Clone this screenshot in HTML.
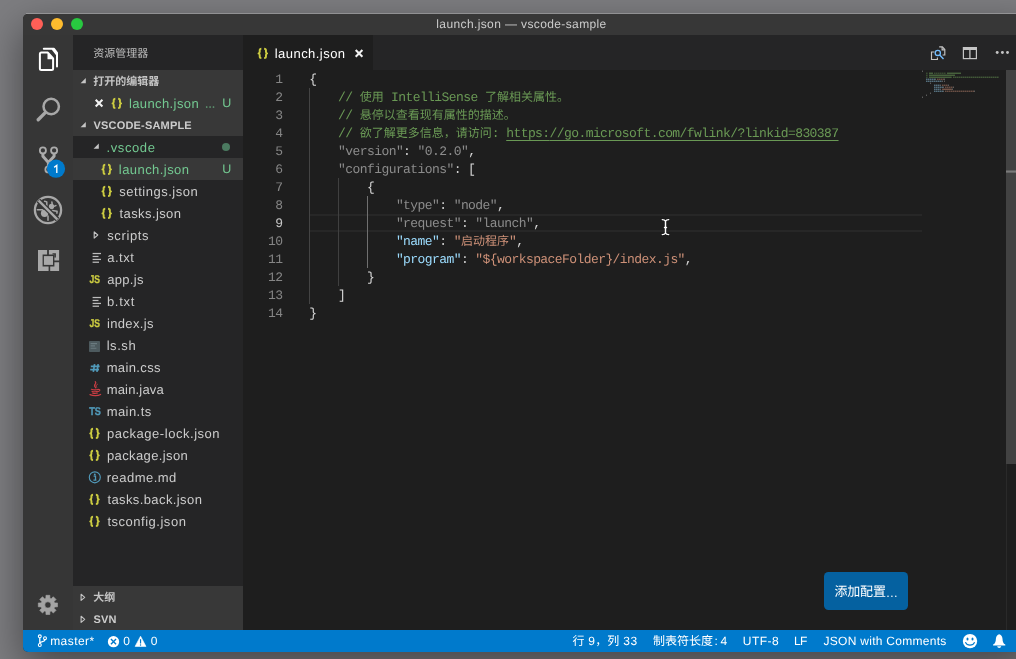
<!DOCTYPE html>
<html lang="zh-CN">
<head>
<meta charset="utf-8">
<title>launch.json — vscode-sample</title>
<style>
html,body{margin:0;padding:0;overflow:hidden;}
body{width:1016px;height:659px;overflow:hidden;position:relative;background:#7d7d80;font-family:"Liberation Sans",sans-serif;text-rendering:geometricPrecision;}
#desk{position:absolute;left:0;top:0;width:1016px;height:659px;background:#7d7d80;overflow:hidden;}
#shadow{position:absolute;left:23px;top:14px;width:1010px;height:638px;border-radius:5px;box-shadow:0 14px 40px rgba(0,0,0,.45);}
#hl{position:absolute;left:26px;top:13px;width:990px;height:1px;background:rgba(255,255,255,.24);}
#win{position:absolute;left:23px;top:14px;width:993px;height:638px;border-radius:5px 0 0 5px;overflow:hidden;background:#1e1e1e;}
/* everything inside #win uses page coordinates through this shim */
#page{position:absolute;left:-23px;top:-14px;width:1016px;height:659px;will-change:transform;}
#page div,#page span,#page svg{position:absolute;}
.t{white-space:pre;line-height:20px;}
svg.cjk{overflow:visible;}
svg.cjk text{font-family:"Liberation Sans","Noto Sans CJK SC",sans-serif;}
svg.cjk.mono text{font-family:"Liberation Mono","Noto Sans CJK SC",monospace;}
#titlebar{left:23px;top:14px;width:993px;height:21px;background:#373737;}
.light{width:12px;height:12px;border-radius:50%;top:18px;}
#activity{left:23px;top:35px;width:50px;height:595px;background:#363636;}
#sidebar{left:73px;top:35px;width:170px;height:595px;background:#252526;}
.hdr{left:73px;width:170px;height:22px;background:#383838;}
.sel{left:73px;width:170px;height:22px;background:#383838;}
#tabs{left:243px;top:35px;width:773px;height:35px;background:#252526;}
#tab{left:243px;top:35px;width:130px;height:35px;background:#1e1e1e;}
#editor{left:243px;top:70px;width:773px;height:560px;background:#1e1e1e;}
.ln{white-space:pre;font-family:"Liberation Mono",monospace;font-size:13px;line-height:18px;height:18px;letter-spacing:-.577px;}
.num{color:#858585;text-align:right;width:40px;left:242.4px;}
.c{color:#6a9955}.k{color:#9cdcfe}.s{color:#ce9178}.p{color:#d4d4d4}.f{color:#8c8c8c}
.guide{width:1px;background:#404040;}
#status{left:23px;top:630px;width:993px;height:22px;background:#007acc;}
</style>
</head>
<body>
<div id="desk"><div id="shadow"></div><div id="hl"></div></div>
<div id="win"><div id="page">

<div id="titlebar"></div>
<div class="light" style="left:31px;background:#ff5f57"></div>
<div class="light" style="left:51px;background:#febc2e"></div>
<div class="light" style="left:71px;background:#28c840"></div>
<span class="t" style="left:436.30px;top:14px;font-size:12px;color:#cccccc;letter-spacing:0.381px;">launch.json — vscode-sample</span>

<div id="activity"></div>
<svg style="left:36px;top:45px" width="24" height="28" viewBox="36 45 24 28" fill="none" stroke="#fff" stroke-width="2" stroke-linejoin="round">
<path d="M43.8 48.8H54L57 52.9V66.4" stroke-linecap="round"/>
<path d="M53 47.9L57.9 53.6L55.9 55L51.6 49.6Z" fill="#fff" stroke="none"/>
<path d="M41.4 52.6H47.9L53.1 58.4V68.6Q53.1 70.1 51.6 70.1H41.4Q39.9 70.1 39.9 68.6V54.1Q39.9 52.6 41.4 52.6Z"/>
<path d="M47.5 53.2V59.2H52.6L52.4 57.6L48.4 53Z" fill="#fff" stroke="none"/>
</svg>
<svg style="left:34px;top:94px" width="30" height="30" viewBox="34 94 30 30" fill="none" stroke="#a8a8a8" stroke-linecap="round">
<circle cx="51.2" cy="106.5" r="7.7" stroke-width="2.5"/><path d="M45.3 112.6L38.2 119.7" stroke-width="3.4"/></svg>
<svg style="left:36px;top:144px" width="32" height="36" viewBox="36 144 32 36" fill="none" stroke="#ababab">
<circle cx="42.9" cy="150.4" r="3.05" stroke-width="1.8"/><circle cx="54.1" cy="150.4" r="3.05" stroke-width="1.8"/><circle cx="48.4" cy="169.4" r="3.05" stroke-width="1.8"/>
<path d="M42.9 153.6V156.2L48.4 162.4V166.2M54.1 153.6V156.2L48.4 162.4" stroke-width="3" stroke-linejoin="round"/>
<circle cx="56" cy="168.7" r="9.1" fill="#007acc" stroke="none"/>
<path d="M54.2 167.4L56.8 165.3V172.9" stroke="#fff" stroke-width="1.35" stroke-linejoin="miter"/></svg>
<svg style="left:32px;top:194px" width="32" height="32" viewBox="-16 -16 32 32" fill="none" stroke="#a8a8a8">
<circle cx="0" cy="0" r="13.1" stroke-width="2.3"/>
<g stroke-width="1.5" stroke-linecap="round" stroke-linejoin="round">
<path d="M-10.7 -.3H-5.6M0 6V10.2M-3.4 -8.8L-1.2 -8.1V-4.6M4.2 .4L9.1 1.3L8.9 3.2M3.9 -7.9L4.3 -5.2M5.8 -3.6L7.9 -4.4"/></g>
<circle cx="-3.4" cy="3.2" r="3.7" fill="#a8a8a8" stroke="none"/><path d="M-4 -1L1 4L3.6 1.4L-1.4 -3.6Z" fill="#a8a8a8" stroke="none"/>
<circle cx="3.5" cy="-3.5" r="2.7" fill="#a8a8a8" stroke="none"/>
<path d="M-9.6 -9.6L9.6 9.6" stroke="#363636" stroke-width="5"/>
<path d="M-9.3 -9.3L9.3 9.3" stroke-width="2.4"/></svg>
<svg style="left:38px;top:250px" width="22" height="22" viewBox="0 0 22 22">
<path d="M0 0H9.1V4.6H4.6V16.4H10.6V21H0Z M10.9 0H21.1V10.6H16.4V4.6H10.9Z M12.2 16.4H16.4V12.2H21.1V21H12.2Z" fill="#a8a8a8"/>
<path d="M13.4 3H17.6V7.3H16V4.6H13.4Z" fill="#363636" opacity=".0"/>
<rect x="5.9" y="6.1" width="9.1" height="8.8" fill="#a8a8a8"/>
<path d="M14.5 3.2H17.9V7.4H16.3V4.6H14.5Z" fill="#363636"/>
</svg>
<svg style="left:35px;top:592px" width="25" height="25" viewBox="35 592 25 25"><path d="M45.90 598.19L45.95 595.30L49.85 595.30L49.90 598.19L51.23 598.74L53.31 596.73L56.07 599.49L54.06 601.57L54.61 602.90L57.50 602.95L57.50 606.85L54.61 606.90L54.06 608.23L56.07 610.31L53.31 613.07L51.23 611.06L49.90 611.61L49.85 614.50L45.95 614.50L45.90 611.61L44.57 611.06L42.49 613.07L39.73 610.31L41.74 608.23L41.19 606.90L38.30 606.85L38.30 602.95L41.19 602.90L41.74 601.57L39.73 599.49L42.49 596.73L44.57 598.74ZM44.80 604.90a3.1 3.1 0 1 0 6.2 0a3.1 3.1 0 1 0 -6.2 0Z" fill="#a3a3a3" fill-rule="evenodd" stroke="#a3a3a3" stroke-width=".6" stroke-linejoin="round"/></svg>

<div id="sidebar"></div>
<svg class="cjk" role="img" aria-label="资源管理器" style="left:93px;top:46px;" width="57" height="16" fill="#bbbbbb"><text x="0.2" y="11.01" font-size="11" fill="#bbbbbb">资源管理器</text></svg>
<div class="hdr" style="top:70px"></div>
<svg style="left:79px;top:77px" width="8" height="8" viewBox="79 77 8 8" ><path d="M85.80 78.00V83.20H80.60Z" fill="#c5c5c5"/></svg>
<svg class="cjk" role="img" aria-label="打开的编辑器" style="left:93px;top:74px;" width="68" height="16" fill="#c4c4c4"><text x="0.2" y="10.96" font-size="11" font-weight="700" fill="#c4c4c4">打开的编辑器</text></svg>
<div class="sel" style="top:92px"></div>
<svg style="left:93px;top:97px" width="13" height="13" viewBox="93 97 13 13" ><path d="M95.70 99.75L102.40 106.45M102.40 99.75L95.70 106.45" stroke="#f2f2f2" stroke-width="2.1" fill="none"/></svg>
<svg style="left:110px;top:96px" width="14" height="15" viewBox="110 96 14 15" fill="none" stroke="#cbcb41" stroke-width="1.95" stroke-linejoin="round"><g transform="translate(111.60 103.40)"><path d="M3.75 -4.65C2.6 -4.65 2.1 -4.2 2.1 -3.1V-1.6C2.1 -.75 1.7 -.2 .95 0C1.7 .2 2.1 .75 2.1 1.6V3.1C2.1 4.2 2.6 4.65 3.75 4.65"/><path d="M6.55 -4.65C7.8 -4.65 8.35 -4.2 8.35 -3.1V-1.6C8.35 -.75 8.75 -.2 9.5 0C8.75 .2 8.35 .75 8.35 1.6V3.1C8.35 4.2 7.8 4.65 6.55 4.65"/></g></svg>
<span class="t" style="left:128.95px;top:94px;font-size:13px;color:#73c991;letter-spacing:0.395px;">launch.json</span>
<svg style="left:204px;top:104px" width="12" height="5" viewBox="204 104 12 5" fill="#73c991" opacity=".75"><circle cx="206.7" cy="107" r=".85"/><circle cx="210.1" cy="107" r=".85"/><circle cx="213.5" cy="107" r=".85"/></svg>
<span class="t" style="left:222.25px;top:93px;font-size:12.5px;color:#73c991;">U</span>
<div class="hdr" style="top:114px"></div>
<svg style="left:79px;top:121px" width="8" height="8" viewBox="79 121 8 8" ><path d="M85.80 122.00V127.20H80.60Z" fill="#c5c5c5"/></svg>
<span class="t" style="left:93.50px;top:116px;font-size:11px;color:#cccccc;font-weight:700;letter-spacing:0.183px;">VSCODE-SAMPLE</span>
<svg style="left:92px;top:142px" width="8" height="8" viewBox="92 142 8 8" ><path d="M98.80 143.50V148.70H93.60Z" fill="#c5c5c5"/></svg>
<span class="t" style="left:106.40px;top:138px;font-size:13px;color:#73c991;letter-spacing:0.625px;">.vscode</span>
<div style="left:222px;top:143px;width:8px;height:8px;border-radius:50%;background:#4b7a60"></div>
<div class="sel" style="top:158px"></div>
<svg style="left:100px;top:162px" width="14" height="15" viewBox="100 162 14 15" fill="none" stroke="#cbcb41" stroke-width="1.95" stroke-linejoin="round"><g transform="translate(101.50 169.40)"><path d="M3.75 -4.65C2.6 -4.65 2.1 -4.2 2.1 -3.1V-1.6C2.1 -.75 1.7 -.2 .95 0C1.7 .2 2.1 .75 2.1 1.6V3.1C2.1 4.2 2.6 4.65 3.75 4.65"/><path d="M6.55 -4.65C7.8 -4.65 8.35 -4.2 8.35 -3.1V-1.6C8.35 -.75 8.75 -.2 9.5 0C8.75 .2 8.35 .75 8.35 1.6V3.1C8.35 4.2 7.8 4.65 6.55 4.65"/></g></svg>
<span class="t" style="left:118.85px;top:160px;font-size:13px;color:#73c991;letter-spacing:0.435px;">launch.json</span>
<span class="t" style="left:222.25px;top:159px;font-size:12.5px;color:#73c991;">U</span>
<svg style="left:100px;top:184px" width="14" height="15" viewBox="100 184 14 15" fill="none" stroke="#cbcb41" stroke-width="1.95" stroke-linejoin="round"><g transform="translate(101.50 191.40)"><path d="M3.75 -4.65C2.6 -4.65 2.1 -4.2 2.1 -3.1V-1.6C2.1 -.75 1.7 -.2 .95 0C1.7 .2 2.1 .75 2.1 1.6V3.1C2.1 4.2 2.6 4.65 3.75 4.65"/><path d="M6.55 -4.65C7.8 -4.65 8.35 -4.2 8.35 -3.1V-1.6C8.35 -.75 8.75 -.2 9.5 0C8.75 .2 8.35 .75 8.35 1.6V3.1C8.35 4.2 7.8 4.65 6.55 4.65"/></g></svg>
<span class="t" style="left:119.35px;top:182px;font-size:13px;color:#ccc;letter-spacing:0.504px;">settings.json</span>
<svg style="left:100px;top:206px" width="14" height="15" viewBox="100 206 14 15" fill="none" stroke="#cbcb41" stroke-width="1.95" stroke-linejoin="round"><g transform="translate(101.50 213.40)"><path d="M3.75 -4.65C2.6 -4.65 2.1 -4.2 2.1 -3.1V-1.6C2.1 -.75 1.7 -.2 .95 0C1.7 .2 2.1 .75 2.1 1.6V3.1C2.1 4.2 2.6 4.65 3.75 4.65"/><path d="M6.55 -4.65C7.8 -4.65 8.35 -4.2 8.35 -3.1V-1.6C8.35 -.75 8.75 -.2 9.5 0C8.75 .2 8.35 .75 8.35 1.6V3.1C8.35 4.2 7.8 4.65 6.55 4.65"/></g></svg>
<span class="t" style="left:119.60px;top:204px;font-size:13px;color:#ccc;letter-spacing:0.389px;">tasks.json</span>
<svg style="left:92px;top:230px" width="8" height="10" viewBox="92 230 8 10" ><path d="M94.20 231.90L97.80 235.00L94.20 238.10Z" fill="none" stroke="#c5c5c5" stroke-width="1.1" stroke-linejoin="round"/></svg>
<span class="t" style="left:107.15px;top:226px;font-size:13px;color:#ccc;letter-spacing:0.642px;">scripts</span>
<svg style="left:91px;top:251px" width="12" height="14" viewBox="91 251 12 14" fill="#bdbdbd"><rect x="92.6" y="252.90" width="8.4" height="1.25"/><rect x="92.6" y="255.85" width="5.9" height="1.25"/><rect x="92.6" y="258.80" width="8.4" height="1.25"/><rect x="92.6" y="261.60" width="6.4" height="1.25"/></svg>
<span class="t" style="left:107.15px;top:248px;font-size:13px;color:#ccc;letter-spacing:0.537px;">a.txt</span>
<svg style="left:88px;top:272px" width="15" height="14" viewBox="88 272 15 14"><text x="89.6" y="283.0" textLength="10.5" lengthAdjust="spacingAndGlyphs" font-family="Liberation Sans, sans-serif" font-weight="700" font-size="11.2" fill="#cbcb41" stroke="#cbcb41" stroke-width=".35">JS</text></svg>
<span class="t" style="left:107.15px;top:270px;font-size:13px;color:#ccc;letter-spacing:0.320px;">app.js</span>
<svg style="left:91px;top:295px" width="12" height="14" viewBox="91 295 12 14" fill="#bdbdbd"><rect x="92.6" y="296.90" width="8.4" height="1.25"/><rect x="92.6" y="299.85" width="5.9" height="1.25"/><rect x="92.6" y="302.80" width="8.4" height="1.25"/><rect x="92.6" y="305.60" width="6.4" height="1.25"/></svg>
<span class="t" style="left:106.90px;top:292px;font-size:13px;color:#ccc;letter-spacing:0.725px;">b.txt</span>
<svg style="left:88px;top:316px" width="15" height="14" viewBox="88 316 15 14"><text x="89.6" y="327.0" textLength="10.5" lengthAdjust="spacingAndGlyphs" font-family="Liberation Sans, sans-serif" font-weight="700" font-size="11.2" fill="#cbcb41" stroke="#cbcb41" stroke-width=".35">JS</text></svg>
<span class="t" style="left:106.90px;top:314px;font-size:13px;color:#ccc;letter-spacing:0.371px;">index.js</span>
<svg style="left:89px;top:341px" width="11" height="11" viewBox="0 0 11 11"><rect width="11" height="11" rx=".8" fill="#4d5a5e"/><path d="M1.6 2.6H8M1.6 4.9H6M1.6 7.2H7.4" stroke="#6b7b80" stroke-width="1.1"/></svg>
<span class="t" style="left:106.65px;top:336px;font-size:13px;color:#ccc;letter-spacing:0.562px;">ls.sh</span>
<svg style="left:89px;top:360px" width="12" height="14" viewBox="89 360 12 14" stroke="#519aba" stroke-width="1.7" fill="none"><path d="M94.6 364.1L93.3 371.9M98.2 364.1L96.9 371.9M90.8 366.4H99.6M90.2 369.6H99"/></svg>
<span class="t" style="left:106.65px;top:358px;font-size:13px;color:#ccc;letter-spacing:0.371px;">main.css</span>
<svg style="left:88px;top:381px" width="14" height="16" viewBox="-7 -8 14 16" fill="none" stroke="#cc3e44" stroke-linecap="round"><path d="M.3 -7.3C2.2 -5.6 -1.6 -4.4 -.2 -2.4C.2 -1.8 .6 -1.5 .8 -1" stroke-width="1.2"/><path d="M2.3 -4.6C.8 -3.8 .6 -3 1.6 -1.8" stroke-width="1"/><path d="M-3.6 .3C-1.5 1 1.5 1 3.4 .3M3.7 .5C5.3 .3 5.3 2 3.3 2.5" stroke-width="1.1"/><path d="M-3.1 2.2C-1.2 2.9 1.2 2.9 2.9 2.3M-2.6 4C-1 4.6 1 4.6 2.5 4.1" stroke-width="1.1"/><path d="M-5 5.6C-2 6.9 3 6.9 5.6 5.4" stroke-width="1.2"/></svg>
<span class="t" style="left:106.65px;top:380px;font-size:13px;color:#ccc;letter-spacing:0.187px;">main.java</span>
<svg style="left:88px;top:404px" width="15" height="14" viewBox="88 404 15 14"><text x="89.2" y="415.0" textLength="11.700000000000003" lengthAdjust="spacingAndGlyphs" font-family="Liberation Sans, sans-serif" font-weight="700" font-size="11.2" fill="#519aba" stroke="#519aba" stroke-width=".35">TS</text></svg>
<span class="t" style="left:106.65px;top:402px;font-size:13px;color:#ccc;letter-spacing:0.442px;">main.ts</span>
<svg style="left:88px;top:426px" width="14" height="15" viewBox="88 426 14 15" fill="none" stroke="#cbcb41" stroke-width="1.95" stroke-linejoin="round"><g transform="translate(89.30 433.40)"><path d="M3.75 -4.65C2.6 -4.65 2.1 -4.2 2.1 -3.1V-1.6C2.1 -.75 1.7 -.2 .95 0C1.7 .2 2.1 .75 2.1 1.6V3.1C2.1 4.2 2.6 4.65 3.75 4.65"/><path d="M6.55 -4.65C7.8 -4.65 8.35 -4.2 8.35 -3.1V-1.6C8.35 -.75 8.75 -.2 9.5 0C8.75 .2 8.35 .75 8.35 1.6V3.1C8.35 4.2 7.8 4.65 6.55 4.65"/></g></svg>
<span class="t" style="left:106.90px;top:424px;font-size:13px;color:#ccc;letter-spacing:0.541px;">package-lock.json</span>
<svg style="left:88px;top:448px" width="14" height="15" viewBox="88 448 14 15" fill="none" stroke="#cbcb41" stroke-width="1.95" stroke-linejoin="round"><g transform="translate(89.30 455.40)"><path d="M3.75 -4.65C2.6 -4.65 2.1 -4.2 2.1 -3.1V-1.6C2.1 -.75 1.7 -.2 .95 0C1.7 .2 2.1 .75 2.1 1.6V3.1C2.1 4.2 2.6 4.65 3.75 4.65"/><path d="M6.55 -4.65C7.8 -4.65 8.35 -4.2 8.35 -3.1V-1.6C8.35 -.75 8.75 -.2 9.5 0C8.75 .2 8.35 .75 8.35 1.6V3.1C8.35 4.2 7.8 4.65 6.55 4.65"/></g></svg>
<span class="t" style="left:106.90px;top:446px;font-size:13px;color:#ccc;letter-spacing:0.395px;">package.json</span>
<svg style="left:88px;top:470px" width="14" height="14" viewBox="-7 -7 14 14"><circle cx="-.2" cy=".3" r="5.5" fill="none" stroke="#519aba" stroke-width="1.15"/><circle cx="-.2" cy="-2.5" r=".95" fill="#519aba"/><path d="M-1.4 -.8H.5V3M-1.6 3.1H1.4" stroke="#519aba" stroke-width="1.3" fill="none"/></svg>
<span class="t" style="left:106.65px;top:468px;font-size:13px;color:#ccc;letter-spacing:0.494px;">readme.md</span>
<svg style="left:88px;top:492px" width="14" height="15" viewBox="88 492 14 15" fill="none" stroke="#cbcb41" stroke-width="1.95" stroke-linejoin="round"><g transform="translate(89.30 499.40)"><path d="M3.75 -4.65C2.6 -4.65 2.1 -4.2 2.1 -3.1V-1.6C2.1 -.75 1.7 -.2 .95 0C1.7 .2 2.1 .75 2.1 1.6V3.1C2.1 4.2 2.6 4.65 3.75 4.65"/><path d="M6.55 -4.65C7.8 -4.65 8.35 -4.2 8.35 -3.1V-1.6C8.35 -.75 8.75 -.2 9.5 0C8.75 .2 8.35 .75 8.35 1.6V3.1C8.35 4.2 7.8 4.65 6.55 4.65"/></g></svg>
<span class="t" style="left:107.40px;top:490px;font-size:13px;color:#ccc;letter-spacing:0.400px;">tasks.back.json</span>
<svg style="left:88px;top:514px" width="14" height="15" viewBox="88 514 14 15" fill="none" stroke="#cbcb41" stroke-width="1.95" stroke-linejoin="round"><g transform="translate(89.30 521.40)"><path d="M3.75 -4.65C2.6 -4.65 2.1 -4.2 2.1 -3.1V-1.6C2.1 -.75 1.7 -.2 .95 0C1.7 .2 2.1 .75 2.1 1.6V3.1C2.1 4.2 2.6 4.65 3.75 4.65"/><path d="M6.55 -4.65C7.8 -4.65 8.35 -4.2 8.35 -3.1V-1.6C8.35 -.75 8.75 -.2 9.5 0C8.75 .2 8.35 .75 8.35 1.6V3.1C8.35 4.2 7.8 4.65 6.55 4.65"/></g></svg>
<span class="t" style="left:107.40px;top:512px;font-size:13px;color:#ccc;letter-spacing:0.517px;">tsconfig.json</span>
<div class="hdr" style="top:586px;height:44px"></div>
<svg style="left:79px;top:592px" width="8" height="10" viewBox="79 592 8 10" ><path d="M81.10 594.20L84.70 597.30L81.10 600.40Z" fill="none" stroke="#c5c5c5" stroke-width="1.1" stroke-linejoin="round"/></svg>
<svg class="cjk" role="img" aria-label="大纲" style="left:93px;top:590px;" width="24" height="16" fill="#c4c4c4"><text x="0.2" y="11.46" font-size="11" font-weight="700" fill="#c4c4c4">大纲</text></svg>
<svg style="left:79px;top:614px" width="8" height="10" viewBox="79 614 8 10" ><path d="M81.10 616.20L84.70 619.30L81.10 622.40Z" fill="none" stroke="#c5c5c5" stroke-width="1.1" stroke-linejoin="round"/></svg>
<span class="t" style="left:93.50px;top:610px;font-size:11px;color:#cccccc;font-weight:700;letter-spacing:0.200px;">SVN</span>

<div id="tabs"></div>
<div id="tab"></div>
<svg style="left:256px;top:46px" width="14" height="15" viewBox="256 46 14 15" fill="none" stroke="#cbcb41" stroke-width="1.95" stroke-linejoin="round"><g transform="translate(257.60 53.40)"><path d="M3.75 -4.65C2.6 -4.65 2.1 -4.2 2.1 -3.1V-1.6C2.1 -.75 1.7 -.2 .95 0C1.7 .2 2.1 .75 2.1 1.6V3.1C2.1 4.2 2.6 4.65 3.75 4.65"/><path d="M6.55 -4.65C7.8 -4.65 8.35 -4.2 8.35 -3.1V-1.6C8.35 -.75 8.75 -.2 9.5 0C8.75 .2 8.35 .75 8.35 1.6V3.1C8.35 4.2 7.8 4.65 6.55 4.65"/></g></svg>
<span class="t" style="left:274.75px;top:44px;font-size:13px;color:#ffffff;letter-spacing:0.455px;">launch.json</span>
<svg style="left:353px;top:47px" width="13" height="13" viewBox="353 47 13 13" ><path d="M355.70 50.00L362.40 56.70M362.40 50.00L355.70 56.70" stroke="#f2f2f2" stroke-width="2.1" fill="none"/></svg>
<svg style="left:929px;top:44px" width="18" height="18" viewBox="929 44 18 18" fill="none" stroke="#c5c5c5" stroke-width="1.15">
<path d="M939.2 46.8H942.4L944.8 49.5V55H942.6"/><path d="M942.1 47V49.8H944.6"/>
<path d="M934.4 52H931.5V59.5H937.4V57.4"/>
<circle cx="937.8" cy="52.9" r="2.6" stroke="#75beff" stroke-width="1.3"/><path d="M939.7 55L943.5 59.1" stroke="#75beff" stroke-width="1.4"/></svg>
<svg style="left:962px;top:46px" width="16" height="14" viewBox="962 46 16 14" fill="none" stroke="#c5c5c5">
<rect x="963.4" y="47.6" width="13" height="11" stroke-width="1.2"/><path d="M963 48.5H977" stroke-width="3"/><path d="M969.9 48V59" stroke-width="1.3"/></svg>
<svg style="left:994px;top:50px" width="16" height="5" viewBox="994 50 16 5" fill="#c5c5c5"><circle cx="997.2" cy="52.5" r="1.45"/><circle cx="1002.4" cy="52.5" r="1.45"/><circle cx="1007.5" cy="52.5" r="1.45"/></svg>

<div id="editor"></div>
<div style="left:310px;top:214px;width:612px;height:18px;box-sizing:border-box;border-top:2px solid #272727;border-bottom:2px solid #272727"></div>
<div class="guide" style="left:309px;top:88px;height:216px;background:#444"></div>
<div class="guide" style="left:338px;top:178px;height:108px"></div>
<div class="guide" style="left:367px;top:196px;height:72px;background:#707070"></div>
<span class="ln num" style="top:71px;">1</span>
<span class="ln p" style="left:309.20px;top:71px;">{</span>
<span class="ln num" style="top:89px;">2</span>
<span class="ln c" style="left:338.10px;top:89px;">// </span>
<svg class="cjk mono" role="img" aria-label="使用" style="left:359px;top:89px;" width="26" height="17" fill="#6a9955"><text x="0.77" y="12.22" font-size="12" fill="#6a9955">使用</text></svg>
<span class="ln c" style="left:383.77px;top:89px;"> IntelliSense </span>
<svg class="cjk mono" role="img" aria-label="了解相关属性。" style="left:484px;top:89px;" width="86" height="17" fill="#6a9955"><text x="0.9" y="12.22" font-size="12" fill="#6a9955">了解相关属性。</text></svg>
<span class="ln num" style="top:107px;">3</span>
<span class="ln c" style="left:338.10px;top:107px;">// </span>
<svg class="cjk mono" role="img" aria-label="悬停以查看现有属性的描述。" style="left:359px;top:107px;" width="158" height="17" fill="#6a9955"><text x="0.77" y="12.22" font-size="12" fill="#6a9955">悬停以查看现有属性的描述。</text></svg>
<span class="ln num" style="top:125px;">4</span>
<span class="ln c" style="left:338.10px;top:125px;">// </span>
<svg class="cjk mono" role="img" aria-label="欲了解更多信息，请访问" style="left:359px;top:125px;" width="134" height="17" fill="#6a9955"><text x="0.77" y="12.22" font-size="12" fill="#6a9955">欲了解更多信息，请访问</text></svg>
<span class="ln c" style="left:491.77px;top:125px;">: </span>
<span class="ln c" style="left:506.22px;top:125px;text-decoration:underline;text-underline-offset:3px;text-decoration-thickness:1px;">https:</span>
<span class="ln c" style="left:549.56px;top:125px;text-decoration:underline;text-underline-offset:3px;text-decoration-thickness:1px;">//go.microsoft.com/fwlink/?linkid=830387</span>
<span class="ln num" style="top:143px;">5</span>
<span class="ln f" style="left:338.10px;top:143px;">"version"</span>
<span class="ln p" style="left:403.11px;top:143px;">: </span>
<span class="ln f" style="left:417.56px;top:143px;">"0.2.0"</span>
<span class="ln p" style="left:468.13px;top:143px;">,</span>
<span class="ln num" style="top:161px;">6</span>
<span class="ln f" style="left:338.10px;top:161px;">"configurations"</span>
<span class="ln p" style="left:453.68px;top:161px;">: [</span>
<span class="ln num" style="top:179px;">7</span>
<span class="ln p" style="left:366.99px;top:179px;">{</span>
<span class="ln num" style="top:197px;">8</span>
<span class="ln f" style="left:395.89px;top:197px;">"type"</span>
<span class="ln p" style="left:439.23px;top:197px;">: </span>
<span class="ln f" style="left:453.68px;top:197px;">"node"</span>
<span class="ln p" style="left:497.02px;top:197px;">,</span>
<span class="ln num" style="top:215px;color:#c6c6c6;">9</span>
<span class="ln f" style="left:395.89px;top:215px;">"request"</span>
<span class="ln p" style="left:460.90px;top:215px;">: </span>
<span class="ln f" style="left:475.35px;top:215px;">"launch"</span>
<span class="ln p" style="left:533.14px;top:215px;">,</span>
<span class="ln num" style="top:233px;">10</span>
<span class="ln k" style="left:395.89px;top:233px;">"name"</span>
<span class="ln p" style="left:439.23px;top:233px;">: </span>
<span class="ln s" style="left:453.68px;top:233px;">"</span>
<svg class="cjk mono" role="img" aria-label="启动程序" style="left:460px;top:233px;" width="50" height="17" fill="#ce9178"><text x="0.9" y="12.22" font-size="12" fill="#ce9178">启动程序</text></svg>
<span class="ln s" style="left:508.90px;top:233px;">"</span>
<span class="ln p" style="left:516.13px;top:233px;">,</span>
<span class="ln num" style="top:251px;">11</span>
<span class="ln k" style="left:395.89px;top:251px;">"program"</span>
<span class="ln p" style="left:460.90px;top:251px;">: </span>
<span class="ln s" style="left:475.35px;top:251px;">"${workspaceFolder}/index.js"</span>
<span class="ln p" style="left:684.85px;top:251px;">,</span>
<span class="ln num" style="top:269px;">12</span>
<span class="ln p" style="left:366.99px;top:269px;">}</span>
<span class="ln num" style="top:287px;">13</span>
<span class="ln p" style="left:338.10px;top:287px;">]</span>
<span class="ln num" style="top:305px;">14</span>
<span class="ln p" style="left:309.20px;top:305px;">}</span>
<svg style="left:659px;top:216px" width="13" height="22" viewBox="659 216 13 22" fill="none" stroke-linecap="round">
<path d="M662.3 219.6Q664.6 219.6 665.5 221.2Q666.4 219.6 668.7 219.6M665.5 221.2V233M662.3 234.6Q664.6 234.6 665.5 233Q666.4 234.6 668.7 234.6M664.3 227.4H666.7" stroke="#1a1a1a" stroke-width="2.6"/>
<path d="M662.3 219.6Q664.6 219.6 665.5 221.2Q666.4 219.6 668.7 219.6M665.5 221.2V233M662.3 234.6Q664.6 234.6 665.5 233Q666.4 234.6 668.7 234.6M664.5 227.4H666.5" stroke="#fff" stroke-width="1.45"/></svg>
<svg style="left:922px;top:70px" width="84" height="30" viewBox="0 0 84 30" fill="none" stroke-width="1"><path d="M0 1.2h1M13 9.2h1M22 9.2h1M20 11.2h1M22 11.2h1M8 13.2h1M18 15.2h1M26 15.2h1M21 17.2h1M31 17.2h1M18 19.2h1M30 19.2h1M21 21.2h1M52 21.2h1M8 23.2h1M4 25.2h1M0 27.2h1" stroke="#d4d4d4" stroke-opacity="0.5"/><path d="M4 3.2h2M12 3.2h12M4 5.2h2M4 7.2h2M29 7.2h1" stroke="#6a9955" stroke-opacity="0.55" stroke-dasharray="1.6 .4"/><path d="M7 3.2h4M25 3.2h14M7 5.2h26M7 7.2h22" stroke="#6a9955" stroke-opacity="0.8"/><path d="M31 7.2h6M37 7.2h40" stroke="#6a9955" stroke-opacity="0.7" stroke-dasharray="1.6 .4"/><path d="M4 9.2h9M4 11.2h16M12 15.2h6M12 17.2h9" stroke="#9cdcfe" stroke-opacity="0.62" stroke-dasharray="1.6 .4"/><path d="M15 9.2h7M20 15.2h6M23 17.2h8" stroke="#ce9178" stroke-opacity="0.62" stroke-dasharray="1.6 .4"/><path d="M12 19.2h6M12 21.2h9" stroke="#9cdcfe" stroke-opacity="0.62" stroke-dasharray="1.6 .4"/><path d="M20 19.2h1M29 19.2h1M23 21.2h29" stroke="#ce9178" stroke-opacity="0.62" stroke-dasharray="1.6 .4"/><path d="M21 19.2h8" stroke="#ce9178" stroke-opacity="0.7"/></svg>
<div style="left:1006px;top:70px;width:10px;height:560px;border-left:1px solid #2a2a2a;box-sizing:border-box"></div>
<div style="left:1006px;top:70px;width:10px;height:394px;background:#424242"></div>
<svg style="left:1006px;top:169px" width="10" height="5" viewBox="1006 169 10 5" ><rect x="1006" y="170.6" width="10" height="1.9" fill="#7a7a7a"/><rect x="1006" y="170.1" width="10" height="2.9" fill="#7a7a7a" opacity=".25"/></svg>
<div style="left:824px;top:572px;width:84px;height:38px;border-radius:4.5px;background:#0561a0"></div>
<svg class="cjk" role="img" aria-label="添加配置" style="left:834px;top:583px;" width="54" height="19" fill="#ffffff"><text x="0.4" y="13.28" font-size="13" letter-spacing="-0.15" fill="#ffffff">添加配置</text></svg>
<svg style="left:886px;top:594px" width="12" height="4" viewBox="886 594 12 4" fill="#fff"><circle cx="888" cy="596.2" r=".8"/><circle cx="891.9" cy="596.2" r=".8"/><circle cx="895.8" cy="596.2" r=".8"/></svg>

<div id="status"></div>
<svg style="left:36px;top:633px" width="12" height="15" viewBox="35.6 633 12 15" fill="none" stroke="#fff" stroke-width="1.1">
<circle cx="39.4" cy="636.3" r="1.45"/><circle cx="39.4" cy="645" r="1.45"/><circle cx="44.6" cy="638.2" r="1.45"/>
<path d="M39.4 637.8V643.5M44.6 639.7C44.6 642 39.6 641.2 39.4 643.4" stroke-width="1.3"/></svg>
<span class="t" style="left:50.20px;top:631px;font-size:12px;color:#ffffff;letter-spacing:0.433px;">master*</span>
<svg style="left:107px;top:635px" width="13" height="14" viewBox="-6.5 -6.65 13 14"><circle r="5.65" fill="#fff"/>
<path d="M-2.55 -2.55L2.55 2.55M2.55 -2.55L-2.55 2.55" stroke="#007acc" stroke-width="1.4"/></svg>
<span class="t" style="left:123.25px;top:631px;font-size:12px;color:#ffffff;">0</span>
<svg style="left:134px;top:635px" width="13" height="13" viewBox="134 635 13 13"><path d="M140.55 636.2L146 646.4H135.1Z" fill="#fff" stroke="#fff" stroke-width=".6" stroke-linejoin="round"/>
<path d="M140.55 639.2V643.5" stroke="#007acc" stroke-width="1.2"/><circle cx="140.55" cy="645" r=".72" fill="#007acc"/></svg>
<span class="t" style="left:150.85px;top:631px;font-size:12px;color:#ffffff;">0</span>
<svg class="cjk" role="img" aria-label="行" style="left:572px;top:633px;" width="14" height="17" fill="#ffffff"><text x="0.5" y="12.02" font-size="12" fill="#ffffff">行</text></svg>
<span class="t" style="left:588.15px;top:631px;font-size:12px;color:#ffffff;">9</span>
<svg class="cjk" role="img" aria-label="，列" style="left:595px;top:633px;" width="26" height="17" fill="#ffffff"><text x="0.3" y="12.02" font-size="12" fill="#ffffff">，列</text></svg>
<span class="t" style="left:623.25px;top:631px;font-size:12px;color:#ffffff;letter-spacing:0.700px;">33</span>
<svg class="cjk" role="img" aria-label="制表符长度" style="left:653px;top:633px;" width="62" height="17" fill="#ffffff"><text x="0" y="12.02" font-size="12" fill="#ffffff">制表符长度</text></svg>
<span class="t" style="left:714.55px;top:631px;font-size:12px;color:#ffffff;">:</span>
<span class="t" style="left:720.40px;top:631px;font-size:12px;color:#ffffff;">4</span>
<span class="t" style="left:742.75px;top:631px;font-size:12px;color:#ffffff;letter-spacing:0.488px;">UTF-8</span>
<span class="t" style="left:793.95px;top:631px;font-size:12px;color:#ffffff;letter-spacing:-0.650px;">LF</span>
<span class="t" style="left:823.50px;top:631px;font-size:12px;color:#ffffff;letter-spacing:0.282px;">JSON with Comments</span>
<svg style="left:962px;top:633px" width="16" height="16" viewBox="-8 -8.1 16 16"><circle r="7.2" fill="#fff"/>
<ellipse cx="-2.5" cy="-2.2" rx="1" ry="1.5" fill="#007acc"/><ellipse cx="2.5" cy="-2.2" rx="1" ry="1.5" fill="#007acc"/>
<path d="M-4.4 1.4C-3 4.9 3 4.9 4.4 1.4" fill="none" stroke="#007acc" stroke-width="1.05" stroke-linecap="round"/></svg>
<svg style="left:992px;top:633px" width="15" height="16" viewBox="992 633 15 16" fill="#fff">
<path d="M999.2 634.2C997.4 634.6 996.1 636.3 995.9 638.7C995.8 641.6 995.2 643.4 993.1 644.6V645.5H1005.3V644.6C1003.2 643.4 1002.6 641.6 1002.5 638.7C1002.3 636.3 1001 634.6 999.2 634.2Z"/>
<path d="M997.2 646.3H1001.2C1000.9 648.6 997.5 648.6 997.2 646.3Z"/></svg>

</div></div>
</body>
</html>
